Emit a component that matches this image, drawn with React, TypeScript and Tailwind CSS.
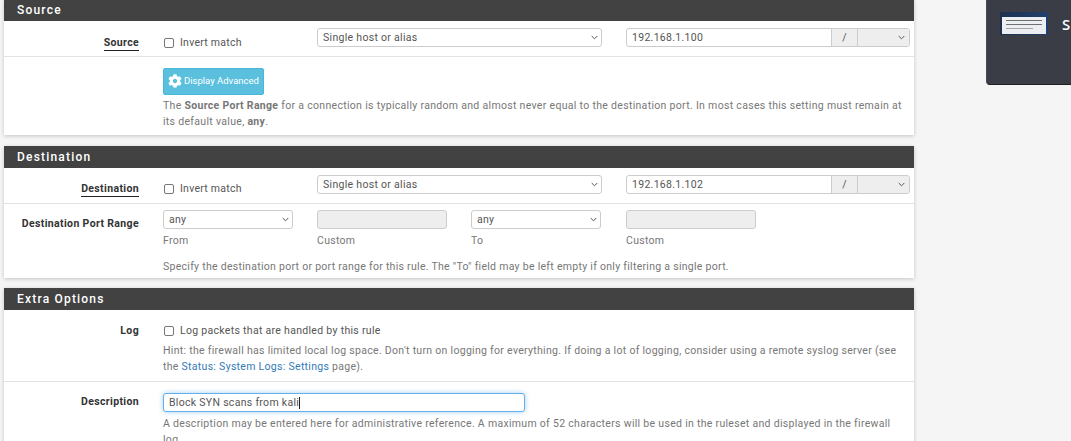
import { FaCog } from "react-icons/fa";

const labelCls = "w-[135px] shrink-0 text-right text-[10.5px] tracking-[0.36px] font-bold text-[#333]";
const hintCls = "text-[10.5px] leading-[16px] text-[#777]";
const fieldCls = "h-[19px] rounded-[3px] border border-[#ccc] bg-white text-[10.5px] tracking-[0.3px] text-[#555] flex items-center";

const Chevron = () => (
    <svg className="w-[7px] h-[5px] shrink-0" viewBox="0 0 7 5" fill="none" aria-hidden="true">
        <path stroke="#555" strokeWidth="1" d="M.7 1 3.5 3.8 6.3 1" />
    </svg>
);

const Select = ({ value, className }: { value: string; className: string }) => (
    <div className={`${fieldCls} ${className} justify-between pl-[5px] pr-[3px]`}>
        <span>{value}</span>
        <Chevron />
    </div>
);

const Checkbox = () => (
    <span className="w-[10px] h-[10px] shrink-0 rounded-[2px] border border-[#767676] bg-white" />
);

const SectionHeader = ({ title }: { title: string }) => (
    <div className="h-[22px] bg-[#424242] pl-[13px] flex items-center text-[12px] font-medium tracking-[1.2px] text-white">
        {title}
    </div>
);

const AddressRow = ({ label, address, top }: { label: string; address: string; top: string }) => (
    <div className="h-[36px] flex items-start border-b border-[#e3e3e3]">
        <div className={`${labelCls} ${top}`}>
            <span className="border-b border-[#222] pb-[1px]">{label}</span>
        </div>
        <label className={`ml-[25px] w-[153px] shrink-0 ${top} leading-[15px] flex items-center gap-[6px] text-[10.5px] tracking-[0.25px] text-[#555]`}>
            <Checkbox />
            Invert match
        </label>
        <div className="flex items-center pt-[7px]">
            <Select value="Single host or alias" className="w-[285px]" />
            <div className={`${fieldCls} ml-[24px] w-[284px] overflow-hidden`}>
                <span className="flex-1 pl-[5px]">{address}</span>
                <span className="w-[26px] h-full flex items-center justify-center bg-[#eee] border-l border-[#ccc]">/</span>
                <span className="w-[52px] h-full flex items-center justify-end pr-[4px] bg-[#eee] border-l border-[#ccc]">
                    <Chevron />
                </span>
            </div>
        </div>
    </div>
);

const PortField = ({ kind, caption, className }: { kind: "select" | "input"; caption: string; className: string }) => (
    <div className={className}>
        {kind === "select" ? (
            <Select value="any" className="w-[130px]" />
        ) : (
            <div className={`${fieldCls} w-[130px] !bg-[#eee]`} />
        )}
        <div className="mt-[4px] text-[10.5px] leading-[15px] tracking-[0.3px] text-[#777]">{caption}</div>
    </div>
);

export default function App() {
    return (
        <div className="relative h-[441px] w-[1071px] overflow-hidden bg-[#f5f5f5] font-['Roboto',sans-serif]">
            <div className="ml-[4px] w-[910px] -mt-[1px]">
                <section className="bg-white shadow-[0_1px_4px_rgba(0,0,0,0.2)]">
                    <SectionHeader title="Source" />
                    <AddressRow label="Source" address="192.168.1.100" top="pt-[14px]" />
                    <div className="h-[78px] pl-[159px] pr-[10px] pt-[11px]">
                        <button className="h-[27px] w-[101px] rounded-[2px] border border-[#46b8da] bg-[#5bc0de] flex items-center pl-[4px] gap-[2px] text-[9.5px] text-white">
                            <FaCog className="w-[14px] h-[14px] shrink-0 -mt-[2px]" />
                            Display Advanced
                        </button>
                        <p className={`${hintCls} mt-[3px] tracking-[0.31px]`}>
                            The <b>Source Port Range</b> for a connection is typically random and almost never equal to the destination port. In most cases this setting must remain at its default value, <b>any</b>.
                        </p>
                    </div>
                </section>

                <section className="mt-[11px] bg-white shadow-[0_1px_4px_rgba(0,0,0,0.2)]">
                    <SectionHeader title="Destination" />
                    <AddressRow label="Destination" address="192.168.1.102" top="pt-[13px]" />
                    <div className="h-[74px] flex">
                        <div className={`${labelCls} pt-[12px]`}>Destination Port Range</div>
                        <div className="ml-[24px] flex-1 pt-[6px]">
                            <div className="flex">
                                <PortField kind="select" caption="From" className="w-[154px]" />
                                <PortField kind="input" caption="Custom" className="w-[154px]" />
                                <PortField kind="select" caption="To" className="w-[155px]" />
                                <PortField kind="input" caption="Custom" className="w-[130px]" />
                            </div>
                            <p className={`${hintCls} mt-[11px] tracking-[0.285px]`}>
                                Specify the destination port or port range for this rule. The "To" field may be left empty if only filtering a single port.
                            </p>
                        </div>
                    </div>
                </section>

                <section className="mt-[10px] bg-white shadow-[0_1px_4px_rgba(0,0,0,0.2)]">
                    <SectionHeader title="Extra Options" />
                    <div className="h-[72px] flex border-b border-[#e3e3e3]">
                        <div className={`${labelCls} pt-[13px]`}>Log</div>
                        <div className="ml-[25px] flex-1 pr-[10px] pt-[13px]">
                            <label className="flex items-center gap-[6px] text-[10.5px] leading-[15px] tracking-[0.3px] text-[#555]">
                                <Checkbox />
                                Log packets that are handled by this rule
                            </label>
                            <p className={`${hintCls} mt-[5px] -ml-[1px] tracking-[0.295px]`}>
                                Hint: the firewall has limited local log space. Don't turn on logging for everything. If doing a lot of logging, consider using a remote syslog server (see the <span className="text-[#337ab7]">Status: System Logs: Settings</span> page).
                            </p>
                        </div>
                    </div>
                    <div className="h-[70px] flex">
                        <div className={`${labelCls} pt-[12px]`}>Description</div>
                        <div className="ml-[24px] flex-1 pr-[10px] pt-[11px]">
                            <div className={`${fieldCls} w-[362px] pl-[5px] !border-[#66afe9] shadow-[0_0_5px_rgba(102,175,233,0.6)]`}>
                                Block SYN scans from kali
                                <span className="w-px h-[12px] bg-[#222]" />
                            </div>
                            <p className={`${hintCls} mt-[4px] tracking-[0.3px]`}>
                                A description may be entered here for administrative reference. A maximum of 52 characters will be used in the ruleset and displayed in the firewall log.
                            </p>
                        </div>
                    </div>
                </section>
            </div>

            <div className="absolute left-[986px] -top-[10px] h-[95px] w-[100px] rounded-[4px] border border-[#4a4d57] border-b-[#1f2026] bg-[#3a3d46] pl-[13px] pt-[21px] flex items-start gap-[14px]">
                <div className="h-[23px] w-[48px] shrink-0 bg-gradient-to-r from-[#1d3050] to-[#22406e] px-[2px] pt-[5px] pb-[1px]">
                    <div className="h-full w-full bg-[#eceef1] px-[4px] pt-[3px] flex flex-col gap-[3px]">
                        <div className="h-px w-full bg-[#6f6f6f]" />
                        <div className="h-px w-full bg-[#6f6f6f]" />
                        <div className="h-px w-3/4 bg-[#a5a5a5]" />
                    </div>
                </div>
                <span className="text-[15px] leading-[24px] font-['Open_Sans',sans-serif] font-semibold text-white">S</span>
            </div>
        </div>
    );
}
